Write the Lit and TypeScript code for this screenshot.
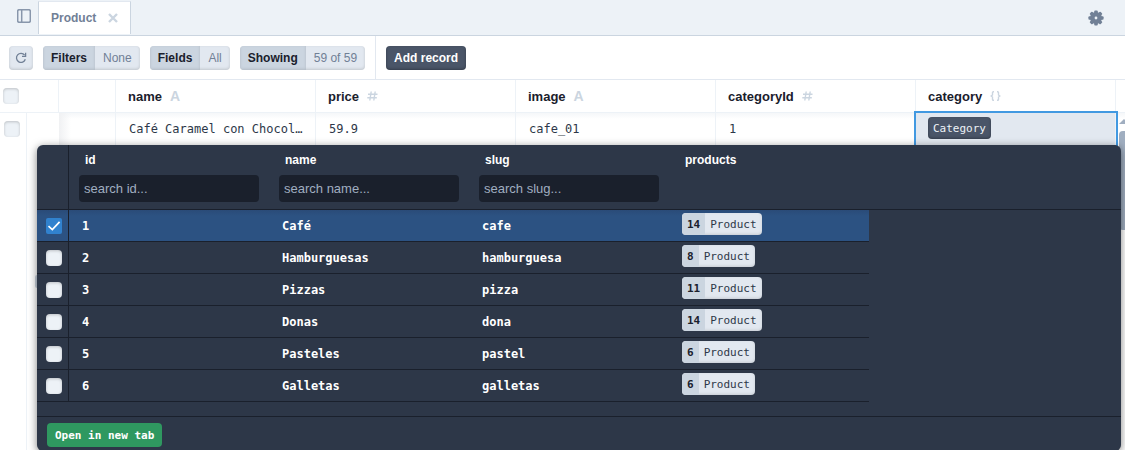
import { LitElement, html, css, svg } from "lit";
import { customElement, state } from "lit/decorators.js";
import { classMap } from "lit/directives/class-map.js";

interface Column {
  name: string;
  type: "text" | "number" | "object";
}

interface Category {
  id: number;
  name: string;
  slug: string;
  products: number;
}

const COLUMNS: Column[] = [
  { name: "name", type: "text" },
  { name: "price", type: "number" },
  { name: "image", type: "text" },
  { name: "categoryId", type: "number" },
  { name: "category", type: "object" },
];

const CATEGORIES: Category[] = [
  { id: 1, name: "Café", slug: "cafe", products: 14 },
  { id: 2, name: "Hamburguesas", slug: "hamburguesa", products: 8 },
  { id: 3, name: "Pizzas", slug: "pizza", products: 11 },
  { id: 4, name: "Donas", slug: "dona", products: 14 },
  { id: 5, name: "Pasteles", slug: "pastel", products: 6 },
  { id: 6, name: "Galletas", slug: "galletas", products: 6 },
];

const TEETH = [0, 45, 90, 135, 180, 225, 270, 315];

const base = css`
  *,
  *::before {
    box-sizing: border-box;
  }
  button,
  input {
    font: inherit;
    color: inherit;
    margin: 0;
    border: 0;
    padding: 0;
  }
  button {
    background: none;
  }
  svg {
    display: block;
  }
  table {
    border-collapse: separate;
    border-spacing: 0;
    table-layout: fixed;
    width: 100%;
  }
  th,
  td {
    padding: 0;
    text-align: left;
  }
  .check {
    appearance: none;
    display: block;
    width: 16px;
    height: 16px;
    border-radius: 4px;
    background: #edf2f7;
    box-shadow: inset 0 1px 3px rgba(0, 0, 0, 0.2);
  }
  .mono {
    font-family: "DejaVu Sans Mono", monospace;
  }
`;

@customElement("relation-picker")
export class RelationPicker extends LitElement {
  @state() private selected = 1;

  static styles = [
    base,
    css`
      :host {
        display: block;
        background: #2d3748;
        color: #fff;
        border-radius: 6px;
        box-shadow: 0 2px 8px rgba(0, 0, 0, 0.5);
        overflow: hidden;
        font-size: 12px;
      }
      .col-check {
        width: 32px;
      }
      .col-data {
        width: 200px;
      }
      .head {
        height: 65px;
        padding: 7px 10px 0;
        vertical-align: top;
        border-bottom: 1px solid #1a202c;
      }
      .label {
        display: block;
        padding-left: 6px;
        line-height: 16px;
      }
      .search {
        display: block;
        width: 100%;
        height: 27px;
        margin-top: 7px;
        padding: 0 5px;
        border-radius: 4px;
        background: #1a202c;
        font-size: 13px;
        font-weight: 400;
      }
      .search::placeholder {
        color: #a0aec0;
        opacity: 1;
      }
      .edge {
        border-right: 1px solid #1a202c;
      }
      .cell {
        height: 32px;
        padding: 0 13px;
        font-weight: 700;
        border-bottom: 1px solid #1a202c;
      }
      .cell.edge {
        padding: 0 6px 0 9px;
      }
      .picked .cell {
        background: linear-gradient(#2a4b78, #2c5282 6px);
      }
      .cell .check:checked {
        border-radius: 2px;
        background: #3182ce;
        box-shadow: none;
      }
      .pick {
        display: grid;
      }
      .pick > * {
        grid-area: 1 / 1;
      }
      .tick {
        pointer-events: none;
      }
      .cell.rel {
        padding-bottom: 3px;
      }
      .chip {
        display: flex;
        width: max-content;
        height: 22px;
        line-height: 24px;
        border-radius: 4px;
        overflow: hidden;
        background: #e2e8f0;
        color: #1a202c;
        font-size: 11px;
        font-weight: 400;
        box-shadow: inset 0 -1px 3px rgba(0, 0, 0, 0.12);
      }
      .count {
        padding: 0 5px;
        background: #cbd5e0;
        font-weight: 700;
      }
      .model {
        padding: 0 5px;
        color: #2d3748;
      }
      .foot {
        display: flex;
        margin-top: 14px;
        padding: 6px 10px 4px;
        border-top: 1px solid #1a202c;
      }
      .open {
        height: 24px;
        padding: 0 8px;
        border-radius: 4px;
        background: #2f9860;
        font-size: 11px;
        font-weight: 700;
      }
    `,
  ];

  private searchHead(name: string) {
    return html`<th class="head" scope="col">
      <label class="label" for="search-${name}">${name}</label>
      <input class="search" id="search-${name}" type="text" placeholder="search ${name}..." />
    </th>`;
  }

  private row(c: Category) {
    const on = c.id === this.selected;
    return html`<tr class=${classMap({ picked: on })}>
      <td class="cell edge">
        <div class="pick">
          <input
            class="check"
            type="checkbox"
            aria-label="Select ${c.name}"
            .checked=${on}
            @change=${() => (this.selected = on ? 0 : c.id)}
          />
          ${on
            ? html`<svg class="tick" width="16" height="16" viewBox="0 0 16 16" fill="none" stroke="#fff" stroke-width="1.7">
                <path d="M2.5 8.2 L6.3 11.6 L13.6 3.8" />
              </svg>`
            : null}
        </div>
      </td>
      <td class="cell mono">${c.id}</td>
      <td class="cell mono">${c.name}</td>
      <td class="cell mono">${c.slug}</td>
      <td class="cell rel mono">
        <span class="chip"><span class="count">${c.products}</span><span class="model">Product</span></span>
      </td>
    </tr>`;
  }

  render() {
    return html`
      <table>
        <colgroup>
          <col class="col-check" />
          <col class="col-data" /><col class="col-data" /><col class="col-data" /><col class="col-data" />
          <col />
        </colgroup>
        <thead>
          <tr>
            <td class="head edge"></td>
            ${["id", "name", "slug"].map((n) => this.searchHead(n))}
            <th class="head" scope="col"><span class="label">products</span></th>
            <td class="head"></td>
          </tr>
        </thead>
        <tbody>
          ${CATEGORIES.map((c) => this.row(c))}
        </tbody>
      </table>
      <div class="foot"><button class="open mono">Open in new tab</button></div>
    `;
  }
}

@customElement("app-root")
export class AppRoot extends LitElement {
  static styles = [
    base,
    css`
      :host {
        display: flex;
        flex-direction: column;
        height: 100vh;
        overflow: hidden;
        background: #fff;
        color: #1a202c;
        font-family: "Liberation Sans", Arial, sans-serif;
        font-size: 12px;
      }
      .tabs {
        display: flex;
        flex: none;
        height: 36px;
        padding-right: 21px;
        background: #edf2f7;
        border-bottom: 1px solid #cbd5e0;
        color: #718096;
      }
      .toggle {
        width: 38px;
        padding: 0 0 4px 17px;
      }
      .tab {
        display: flex;
        align-items: center;
        gap: 12px;
        height: 33px;
        margin-top: 1px;
        padding: 0 12px;
        background: #fff;
        border: 1px solid #cbd5e0;
        border-top-color: #e2e8f0;
        border-bottom: 0;
        font-weight: 700;
      }
      .settings {
        margin-left: auto;
      }
      .bar {
        display: flex;
        flex: none;
        align-items: center;
        gap: 10px;
        height: 44px;
        padding-left: 9px;
        border-bottom: 1px solid #e2e8f0;
      }
      .pill {
        display: flex;
        height: 24px;
        line-height: 24px;
        border-radius: 4px;
        overflow: hidden;
        background: #e2e8f0;
        color: #718096;
        box-shadow: inset 0 -1px 3px rgba(0, 0, 0, 0.15);
      }
      .key,
      .value {
        padding: 0 8px;
      }
      .key {
        background: #cbd5e0;
        color: #1a202c;
        font-weight: 700;
        box-shadow: inset 0 -1px 3px rgba(0, 0, 0, 0.12);
      }
      .refresh {
        width: 24px;
        justify-content: center;
        align-items: center;
      }
      .actions {
        display: flex;
        align-items: center;
        align-self: stretch;
        padding-left: 10px;
        border-left: 1px solid #e2e8f0;
      }
      .add {
        height: 24px;
        padding: 0 8px;
        border-radius: 4px;
        background: #4a5568;
        color: #fff;
        font-weight: 700;
        box-shadow: inset 0 -1px 3px rgba(0, 0, 0, 0.3);
      }
      .grid {
        position: relative;
        flex: 1;
        min-height: 0;
        display: flex;
        flex-direction: column;
      }
      .col-check {
        width: 27px;
      }
      .col-edit {
        width: 32px;
      }
      .col-expand {
        width: 57px;
      }
      .col-data {
        width: 200px;
      }
      .head {
        height: 33px;
        padding-left: 12px;
        border-right: 1px solid #edf2f7;
        border-bottom: 1px solid #edf2f7;
        font-size: 13px;
      }
      .head.first {
        padding-left: 3px;
      }
      .head.rest,
      .cell.rest {
        border-right: 0;
      }
      .title {
        display: flex;
        align-items: center;
        gap: 8px;
        color: #1a202c;
      }
      .type {
        color: #cbd5e0;
        font-size: 14px;
      }
      .cell {
        height: 32px;
        padding-left: 13px;
        border-right: 1px solid #edf2f7;
        color: #2d3748;
        font-size: 12px;
        white-space: nowrap;
        overflow: hidden;
        text-overflow: ellipsis;
        background: linear-gradient(#f5f7f9, #fff 6px);
      }
      .cell.data {
        padding-right: 12px;
      }
      .cell.first {
        padding-left: 4px;
        background: none;
      }
      .cell.edit {
        border-right: 0;
        background: none;
      }
      .cell.expand {
        background: linear-gradient(90deg, #f0f1f3, transparent 12px), linear-gradient(#f5f7f9, #fff 6px);
      }
      .cell.active {
        padding: 0 0 2px 12px;
        background: #e2e8f0;
        outline: 2px solid #4299e1;
      }
      .tag {
        display: block;
        width: max-content;
        height: 22px;
        padding: 0 5px;
        line-height: 24px;
        border-radius: 4px;
        background: #4a5568;
        color: #edf2f7;
        font-size: 11px;
        box-shadow: inset 0 -1px 3px rgba(0, 0, 0, 0.3);
      }
      .gutter {
        flex: 1;
        width: 27px;
        border-right: 1px solid #edf2f7;
      }
      .scroll {
        position: absolute;
        top: 39px;
        right: 0;
        bottom: 0;
        width: 6px;
        overflow: hidden;
      }
      .thumb {
        width: 12px;
        height: 99px;
        margin-top: 7px;
        border-radius: 4px;
        background: #a0aec0;
      }
      .handle {
        position: absolute;
        top: 195px;
        left: 35px;
        width: 8px;
        height: 13px;
        border-radius: 2px;
        background: #cbd5e0;
      }
      .popup {
        position: absolute;
        top: 65px;
        left: 37px;
        right: 4px;
      }
    `,
  ];

  private typeIcon(type: Column["type"]) {
    if (type === "text") return html`<span class="type">A</span>`;
    const shape =
      type === "number"
        ? svg`<path d="M4.2 0.5 L2.8 9.5 M8.2 0.5 L6.8 9.5 M1 3.2 H10.5 M0.3 6.8 H9.8" />`
        : svg`<path d="M4 0.7 H3.4 Q2.5 0.7 2.5 1.6 V4 L1.2 5 L2.5 6 V8.4 Q2.5 9.3 3.4 9.3 H4 M7 0.7 H7.6 Q8.5 0.7 8.5 1.6 V4 L9.8 5 L8.5 6 V8.4 Q8.5 9.3 7.6 9.3 H7" />`;
    return html`<svg width="11" height="10" viewBox="0 0 11 10" fill="none" stroke="#cbd5e0" stroke-width="1.4">${shape}</svg>`;
  }

  render() {
    return html`
      <header class="tabs">
        <button class="toggle" aria-label="Toggle sidebar">
          <svg width="14" height="14" viewBox="0 0 14 14" fill="none" stroke="#8896ab" stroke-width="1.5">
            <rect x="0.7" y="0.7" width="12.6" height="12.6" rx="1.5" />
            <path d="M4.7 0.7 V13.3" />
          </svg>
        </button>
        <div class="tab">
          <span>Product</span>
          <button aria-label="Close Product">
            <svg width="10" height="10" viewBox="0 0 10 10" stroke="#cbd5e0" stroke-width="2.4">
              <path d="M1 1 L9 9 M9 1 L1 9" />
            </svg>
          </button>
        </div>
        <button class="settings" aria-label="Settings">
          <svg width="16" height="16" viewBox="-8 -8 16 16" fill="#718096">
            ${TEETH.map((a) => svg`<rect x="-1.8" y="-7.6" width="3.6" height="4" rx="1" transform="rotate(${a})" />`)}
            <circle r="3.7" fill="none" stroke="#718096" stroke-width="4.6" />
          </svg>
        </button>
      </header>

      <div class="bar">
        <button class="pill refresh" aria-label="Refresh">
          <svg width="12" height="12" viewBox="0 0 12 12" fill="none" stroke="#718096" stroke-width="1.3">
            <path d="M10.3 7.2 A4.5 4.5 0 1 1 9.6 3.2" />
            <path d="M10.6 0.8 V4.3 H7" />
          </svg>
        </button>
        <button class="pill"><span class="key">Filters</span><span class="value">None</span></button>
        <button class="pill"><span class="key">Fields</span><span class="value">All</span></button>
        <button class="pill"><span class="key">Showing</span><span class="value">59 of 59</span></button>
        <div class="actions"><button class="add">Add record</button></div>
      </div>

      <main class="grid">
        <table>
          <colgroup>
            <col class="col-check" /><col class="col-edit" /><col class="col-expand" />
            ${COLUMNS.map(() => html`<col class="col-data" />`)}
            <col />
          </colgroup>
          <thead>
            <tr>
              <td class="head first" colspan="2"><input class="check" type="checkbox" aria-label="Select all records" /></td>
              <td class="head"></td>
              ${COLUMNS.map(
                (c) => html`<th class="head" scope="col"><div class="title">${c.name}${this.typeIcon(c.type)}</div></th>`
              )}
              <td class="head rest"></td>
            </tr>
          </thead>
          <tbody>
            <tr>
              <td class="cell first"><input class="check" type="checkbox" aria-label="Select record" /></td>
              <td class="cell edit"></td>
              <td class="cell expand"></td>
              <td class="cell data mono">Café Caramel con Chocol…</td>
              <td class="cell data mono">59.9</td>
              <td class="cell data mono">cafe_01</td>
              <td class="cell data mono">1</td>
              <td class="cell active mono"><span class="tag">Category</span></td>
              <td class="cell rest"></td>
            </tr>
          </tbody>
        </table>
        <div class="gutter"></div>
        <div class="scroll">
          <svg width="10" height="5" viewBox="0 0 10 5" fill="#a0aec0"><path d="M0 5 L5 0 L10 5 Z" /></svg>
          <div class="thumb"></div>
        </div>
        <div class="handle"></div>
        <relation-picker class="popup"></relation-picker>
      </main>
    `;
  }
}
